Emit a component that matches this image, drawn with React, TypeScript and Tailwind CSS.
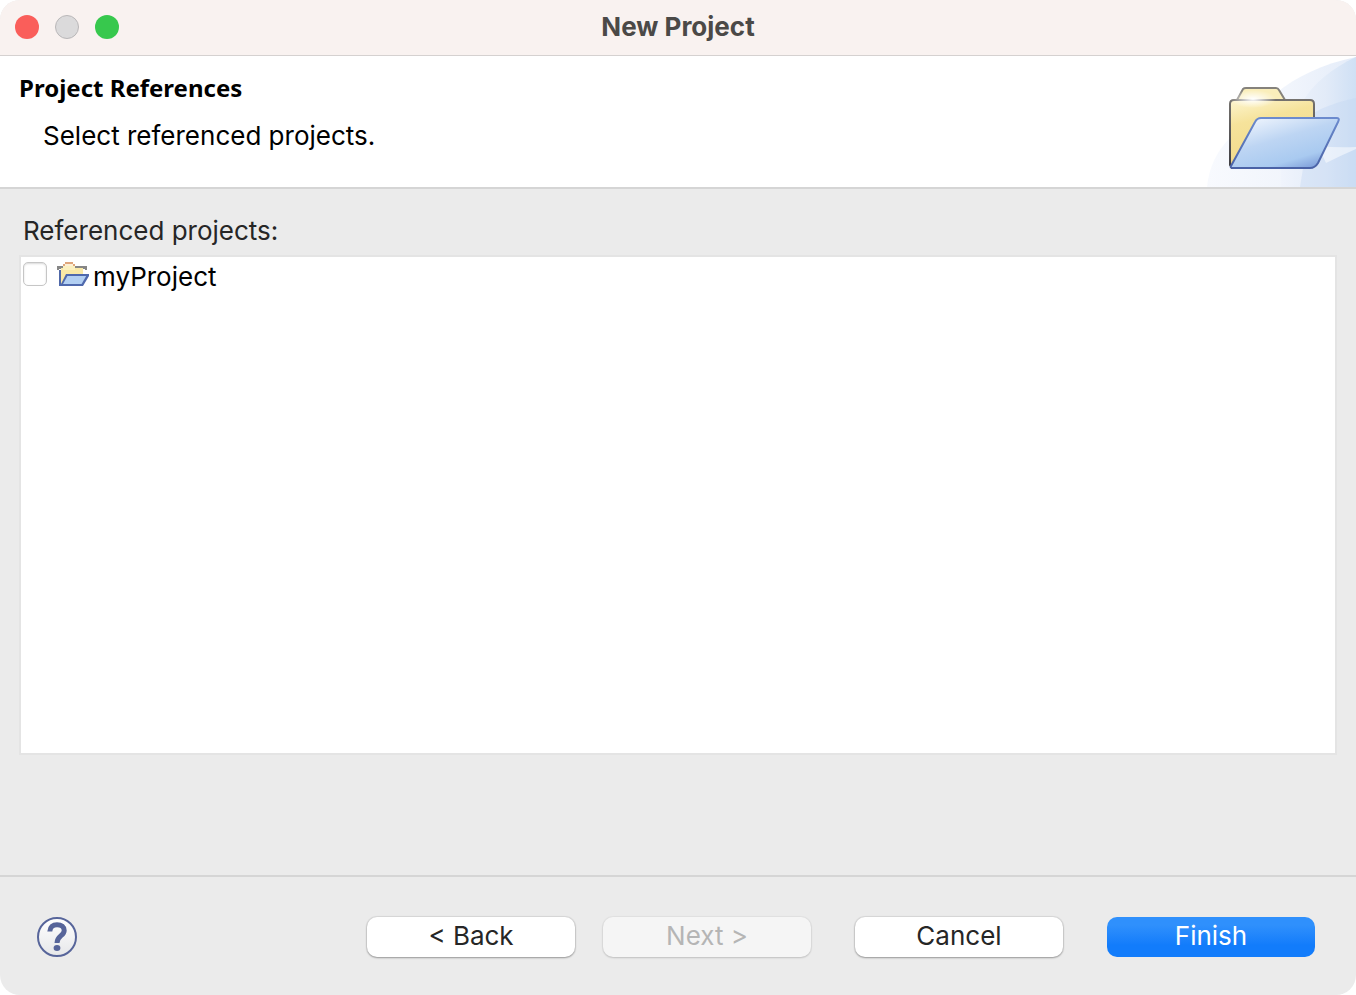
import { useState } from "react";

function WizardBanner() {
  return (
    <svg className="h-[131px] w-[150px] shrink-0" viewBox="0 -1 150 131" aria-hidden="true">
      <defs>
        <linearGradient id="arc" x1="0" y1="0" x2="1" y2="0">
          <stop offset="0" stopColor="#f8fafe" />
          <stop offset="0.55" stopColor="#f1f5fc" />
          <stop offset="1" stopColor="#e4ecf9" />
        </linearGradient>
        <linearGradient id="arcInner" x1="0" y1="0" x2="1" y2="0">
          <stop offset="0" stopColor="#f0f4fc" />
          <stop offset="0.6" stopColor="#e2ebf8" />
          <stop offset="1" stopColor="#cfe0f5" />
        </linearGradient>
        <linearGradient id="back" x1="0" y1="0" x2="0.3" y2="1">
          <stop offset="0" stopColor="#fdf5cf" />
          <stop offset="0.35" stopColor="#f6e39b" />
          <stop offset="0.8" stopColor="#f3dc8e" />
          <stop offset="1" stopColor="#e2a45c" />
        </linearGradient>
        <linearGradient id="front" x1="0.1" y1="0" x2="0.75" y2="1">
          <stop offset="0" stopColor="#f4f8fe" />
          <stop offset="0.45" stopColor="#bdd5f3" />
          <stop offset="0.8" stopColor="#a9caf0" />
          <stop offset="1" stopColor="#7f9fda" />
        </linearGradient>
        <linearGradient id="edge" x1="0" y1="0" x2="0" y2="1">
          <stop offset="0" stopColor="#75726e" />
          <stop offset="1" stopColor="#3c3c42" />
        </linearGradient>
        <linearGradient id="rim" x1="0" y1="0" x2="0" y2="1">
          <stop offset="0" stopColor="#6c8bce" />
          <stop offset="1" stopColor="#4a62a6" />
        </linearGradient>
        <radialGradient id="shine">
          <stop offset="0" stopColor="#fff" />
          <stop offset="1" stopColor="#fff" stopOpacity="0" />
        </radialGradient>
      </defs>
      <path d="M150 0C116 7 90 20 70 36L23 82C11 94 3 110 1 130H150Z" fill="url(#arc)" />
      <path d="M150 0C126 11 107 27 97 44L75 90V130H150Z" fill="url(#arcInner)" />
      <path d="M150 41C131 45 117 50 106 57L94 130H150Z" fill="#c3d8f2" opacity="0.4" />
      <path d="M112 89Q132 91 150 90V92Q136 98 120 106Z" fill="#fff" opacity="0.5" />
      <path d="M31 43L37 32Q38 31 40 31H70Q72 31 73 33L79 43Z" fill="#faeebb" stroke="#85827c" strokeWidth="2" />
      <path d="M24 108V47Q24 43 28 43H104Q108 43 108 47V62L79 108L26 111Z" fill="url(#back)" stroke="url(#edge)" strokeWidth="2" />
      <ellipse cx="47" cy="42" rx="23" ry="9" fill="url(#shine)" />
      <path d="M25 109L49 65Q51 61 55 61H131Q134 61 132 65L112 106Q109 111 104 111H27Q24 111 25 109Z" fill="url(#front)" stroke="url(#rim)" strokeWidth="2" />
    </svg>
  );
}

function ProjectIcon() {
  return (
    <svg className="size-8" viewBox="0 0 16 16" aria-hidden="true">
      <path d="M0 2.500H15V4.500H14V4H1V4.500H0Z" fill="#868686" />
      <path d="M2 3.500H13V12H2Z" fill="#f9e9a6" />
      <path d="M3 3.500V1.500H4V0.500H8V1.500H9V3.500Z" fill="#dfa67c" />
      <path d="M4 1.500H8V2.500H4Z" fill="#fdf0d4" />
      <path d="M3 2.500H9V4.500H3Z" fill="#fbf0c0" />
      <path d="M1 4.500H2V12.500H1Z" fill="#5068a8" />
      <path d="M4.500 6.500H16V7.500L13 12.500H1V11.500H2Z" fill="#4f69ad" />
      <path d="M5.200 7.500H14.600L12.300 11.500H3Z" fill="#b2cff2" />
    </svg>
  );
}

function HelpIcon() {
  return (
    <svg className="size-10" viewBox="0 0 40 40" aria-hidden="true">
      <defs>
        <linearGradient id="help" x1="0" y1="0" x2="0" y2="1">
          <stop offset="0" stopColor="#fff" />
          <stop offset="1" stopColor="#e6e7e9" />
        </linearGradient>
      </defs>
      <circle cx="20" cy="20" r="19" fill="url(#help)" stroke="#57659a" strokeWidth="2" />
      <path d="M12.800 14.500C13 10 16 7.700 20 7.700C24.500 7.700 27.200 10 27.200 13.500C27.200 19 20 18.500 20 26" fill="none" stroke="#57659a" strokeWidth="5" />
      <ellipse cx="20" cy="31" rx="3.400" ry="3" fill="#57659a" />
    </svg>
  );
}

const buttonBase = "h-10 w-[208px] rounded-[10px] pb-[2px] text-[26px] leading-8";
const plainButton = "bg-white text-[#262626] shadow-[0_0_1px_1px_rgba(0,0,0,0.08),0_1px_2px_rgba(0,0,0,0.3)]";

export default function App() {
  const [checked, setChecked] = useState(false);
  return (
    <div className="bg-white font-[Inter,sans-serif]">
      <main className="flex min-h-screen flex-col overflow-hidden rounded-[20px] bg-[#ebebeb]">
        <header className="grid h-14 grid-cols-[1fr_auto_1fr] items-center border-b border-[#d5d1d0] bg-[#f9f2f0] px-[15px] pb-[2px]">
          <div className="flex gap-4">
            <button aria-label="Close" className="size-6 rounded-full bg-[#fa5e5a]" />
            <button aria-label="Minimize" disabled className="size-6 rounded-full border border-[#b9b7b8] bg-[#dbdadb]" />
            <button aria-label="Zoom" className="size-6 rounded-full bg-[#37c84d]" />
          </div>
          <h1 className="text-[26px] leading-8 font-bold text-[#4b4947]">New Project</h1>
        </header>

        <section className="flex items-start justify-between border-b-2 border-[#d5d5d5] bg-white">
          <div className="pt-4 pl-[19px] text-black">
            <h2 className="font-['Noto_Sans',sans-serif] text-[24px] leading-8 font-bold">Project References</h2>
            <p className="mt-4 pl-6 text-[26px] leading-8">Select referenced projects.</p>
          </div>
          <WizardBanner />
        </section>

        <section className="flex flex-1 flex-col px-[19px] pt-[26px] pb-[120px]">
          <h3 id="list-label" className="pl-1 text-[26px] leading-8 text-[#262626]">Referenced projects:</h3>
          <ul aria-labelledby="list-label" className="mt-2 flex-1 border-2 border-[#e4e4e4] bg-white px-[2px] pt-[2px]">
            <li>
              <label className="flex h-9 items-center text-[26px] leading-8 text-black">
                <input
                  type="checkbox"
                  checked={checked}
                  onChange={(e) => setChecked(e.target.checked)}
                  className="mr-[10px] mb-[6px] size-6 appearance-none rounded-[5px] border border-[#c6c6c6] bg-white shadow-[inset_0_1px_2px_rgba(0,0,0,0.15)] checked:bg-[#147efb]"
                />
                <ProjectIcon />
                <span className="ml-1">myProject</span>
              </label>
            </li>
          </ul>
        </section>

        <footer className="flex items-center border-t-2 border-[#d5d5d5] pt-10 pr-[41px] pb-[38px] pl-[37px]">
          <button aria-label="Help" className="rounded-full">
            <HelpIcon />
          </button>
          <div className="ml-auto flex gap-11">
            <div className="flex gap-7">
              <button className={`${buttonBase} ${plainButton}`}>&lt; Back</button>
              <button disabled className={`${buttonBase} bg-[#f5f5f5] text-[#b5b5b5] shadow-[0_0_1px_1px_rgba(0,0,0,0.04),0_1px_2px_rgba(0,0,0,0.15)]`}>
                Next &gt;
              </button>
            </div>
            <button className={`${buttonBase} ${plainButton}`}>Cancel</button>
            <button className={`${buttonBase} bg-linear-to-b from-[#2f90fc] from-20% to-[#127cfb] to-70% text-white`}>
              Finish
            </button>
          </div>
        </footer>
      </main>
    </div>
  );
}
